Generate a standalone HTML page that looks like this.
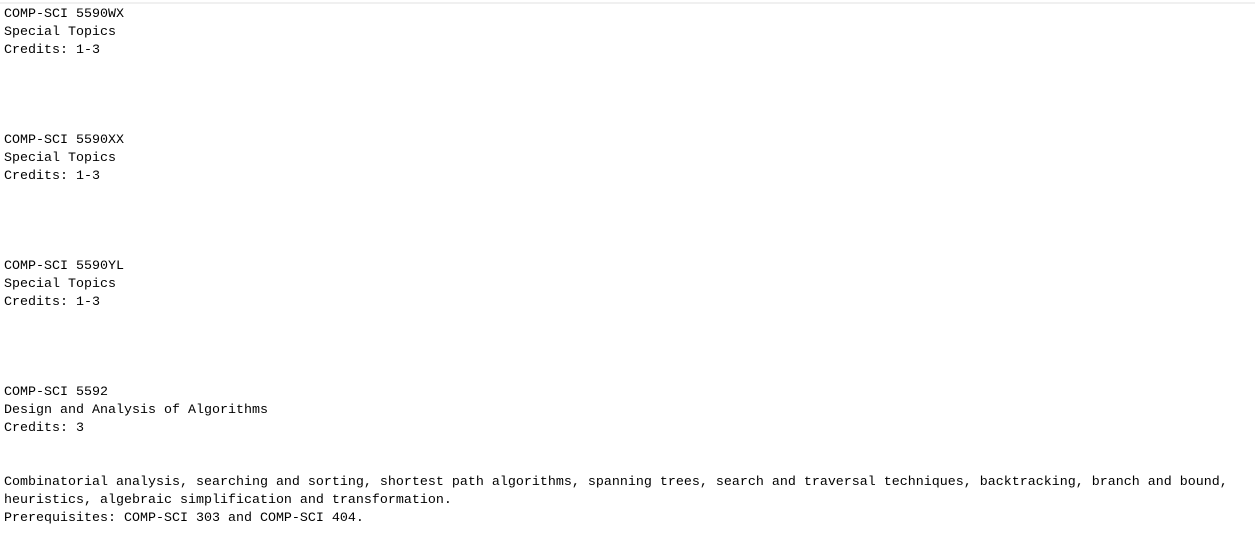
<!DOCTYPE html>
<html><head><meta charset="utf-8"><style>
html,body{margin:0;padding:0;background:#fff;width:1255px;height:545px;overflow:hidden}
.bar{position:absolute;left:0;top:2px;width:1255px;height:2px;background:#f0f0f0}
pre{position:absolute;left:4px;top:6px;margin:0;font-family:"Liberation Mono",monospace;font-size:13.33px;line-height:18px;color:#000}
</style></head><body>
<div class="bar"></div>
<pre>COMP-SCI 5590WX
Special Topics
Credits: 1-3




COMP-SCI 5590XX
Special Topics
Credits: 1-3




COMP-SCI 5590YL
Special Topics
Credits: 1-3




COMP-SCI 5592
Design and Analysis of Algorithms
Credits: 3


Combinatorial analysis, searching and sorting, shortest path algorithms, spanning trees, search and traversal techniques, backtracking, branch and bound,
heuristics, algebraic simplification and transformation.
Prerequisites: COMP-SCI 303 and COMP-SCI 404.</pre>
</body></html>
